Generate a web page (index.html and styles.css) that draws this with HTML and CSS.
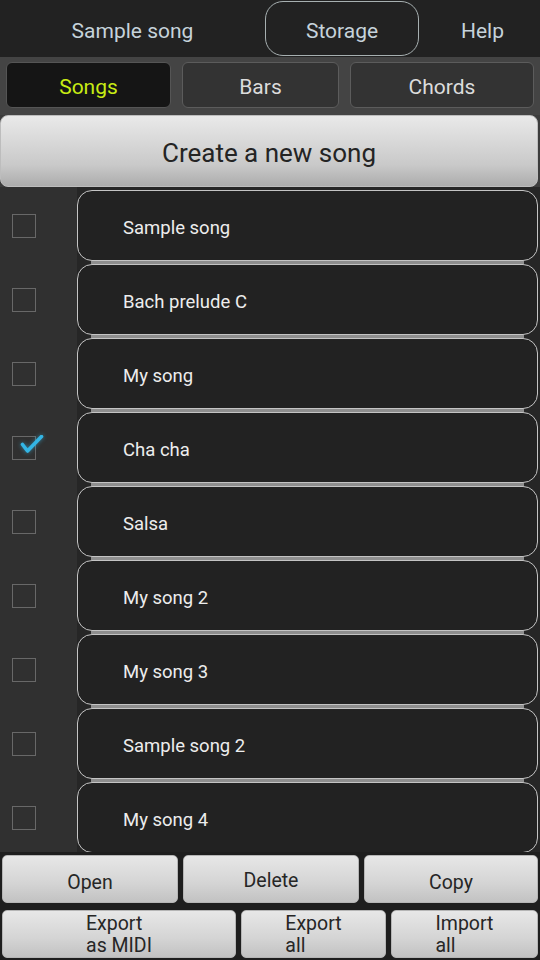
FILE: index.html
```html
<!DOCTYPE html>
<html>
<head>
<meta charset="utf-8">
<link rel="stylesheet" href="styles.css">
</head>
<body>
<div class="app">
  <header class="topbar">
    <div class="top-item">Sample song</div>
    <div class="top-item top-btn">Storage</div>
    <div class="top-item help">Help</div>
  </header>
  <nav class="tabs">
    <div class="tab active">Songs</div>
    <div class="tab">Bars</div>
    <div class="tab">Chords</div>
  </nav>
  <div class="create-wrap">
    <div class="create">Create a new song</div>
  </div>
  <div class="list">
    <div class="row"><div class="check"><span class="box"></span></div><div class="cardcol"><div class="sep"></div><div class="card">Sample song</div></div></div>
    <div class="row"><div class="check"><span class="box"></span></div><div class="cardcol"><div class="sep"></div><div class="card">Bach prelude C</div></div></div>
    <div class="row"><div class="check"><span class="box"></span></div><div class="cardcol"><div class="sep"></div><div class="card">My song</div></div></div>
    <div class="row"><div class="check"><span class="box checked"><svg class="tick" viewBox="0 0 30 30" width="30" height="30"><path d="M6.5 9.5 L11.5 16 L25.5 1.5" fill="none" stroke="#33b5e5" stroke-width="3.6" stroke-linecap="round" stroke-linejoin="round"/></svg></span></div><div class="cardcol"><div class="sep"></div><div class="card">Cha cha</div></div></div>
    <div class="row"><div class="check"><span class="box"></span></div><div class="cardcol"><div class="sep"></div><div class="card">Salsa</div></div></div>
    <div class="row"><div class="check"><span class="box"></span></div><div class="cardcol"><div class="sep"></div><div class="card">My song 2</div></div></div>
    <div class="row"><div class="check"><span class="box"></span></div><div class="cardcol"><div class="sep"></div><div class="card">My song 3</div></div></div>
    <div class="row"><div class="check"><span class="box"></span></div><div class="cardcol"><div class="sep"></div><div class="card">Sample song 2</div></div></div>
    <div class="row"><div class="check"><span class="box"></span></div><div class="cardcol"><div class="sep"></div><div class="card">My song 4</div></div></div>
  </div>
  <footer class="footer">
    <div class="btnrow row1">
      <div class="btn low">Open</div>
      <div class="btn">Delete</div>
      <div class="btn low">Copy</div>
    </div>
    <div class="btnrow row2">
      <div class="btn two"><span class="lines">Export<br>as MIDI</span></div>
      <div class="btn two"><span class="lines">Export<br>all</span></div>
      <div class="btn two"><span class="lines">Import<br>all</span></div>
    </div>
  </footer>
</div>
</body>
</html>
```
FILE: styles.css
```css
* { box-sizing: border-box; }
html, body {
  margin: 0;
  padding: 0;
  background: #1e1e1e;
  font-family: Roboto, "Liberation Sans", sans-serif;
}
.app {
  width: 540px;
  height: 960px;
  overflow: hidden;
  display: flex;
  flex-direction: column;
}
.topbar {
  height: 57px;
  background: #222222;
  display: grid;
  grid-template-columns: 265px 154px 1fr;
  align-items: stretch;
  padding-top: 1px;
}
.top-item {
  color: #c6d3db;
  font-size: 21px;
  display: flex;
  align-items: center;
  justify-content: center;
  padding-top: 4px;
  height: 55px;
}
.top-item.help { padding-left: 6px; }
.top-btn {
  border: 1px solid #a7b0b1;
  border-radius: 18px;
}
.tabs {
  height: 58px;
  background: #444444;
  display: grid;
  grid-template-columns: 165px 157px 184px;
  column-gap: 11px;
  padding: 5px 0 0 6px;
}
.tab {
  height: 46px;
  border: 1px solid #5c5c5c;
  border-radius: 6px;
  background: #333333;
  color: #dcdcdc;
  font-size: 21px;
  display: flex;
  align-items: center;
  justify-content: center;
  padding-top: 4px;
}
.tab.active {
  background: #151515;
  color: #c8ec14;
  border-color: #555555;
}
.create-wrap {
  background: #3c3c3c;
  padding: 0 2px 0 0;
}
.create {
  height: 72px;
  border-radius: 8px;
  border: 1px solid #bdbdbd;
  background: linear-gradient(#e9e9e9, #c9c9c9 70%, #acacac);
  color: #242424;
  font-size: 26px;
  display: flex;
  align-items: center;
  justify-content: center;
  padding-top: 3px;
}
.list {
  height: 665px;
  overflow: hidden;
  flex: none;
}
.row {
  display: grid;
  grid-template-columns: 77px 1fr;
  height: 74px;
}
.check {
  background: #303030;
  padding: 27px 0 0 12px;
}
.box {
  display: block;
  position: relative;
  width: 24px;
  height: 24px;
  border: 1px solid #686868;
}
.tick {
  position: absolute;
  left: 3px;
  top: -2px;
  filter: drop-shadow(0 0 2px rgba(51, 181, 229, 0.6));
}
.cardcol {
  background: #262626;
  padding-right: 2px;
}
.sep {
  height: 3px;
  margin: 0 14px;
  background: #8e8e8e;
}
.row:first-child .sep {
  background: transparent;
}
.card {
  height: 71px;
  border: 1px solid #c4c4c4;
  border-radius: 15px;
  background: #222222;
  color: #ededed;
  font-size: 18.5px;
  display: flex;
  align-items: center;
  padding: 4px 0 0 45px;
}
.footer {
  flex: 1;
  background: #1e1e1e;
  padding: 3px 2px 0 2px;
  display: flex;
  flex-direction: column;
  gap: 7px;
}
.btnrow {
  display: grid;
  height: 48px;
  column-gap: 5px;
}
.row1 { grid-template-columns: 176px 176px 1fr; }
.row2 { grid-template-columns: 234px 145px 1fr; }
.btn {
  border-radius: 5px;
  border: 1px solid #b5b5b5;
  background: linear-gradient(#e7e7e7, #d4d4d4 60%, #c2c2c2);
  color: #262626;
  font-size: 19.5px;
  display: flex;
  align-items: center;
  justify-content: center;
  padding-top: 2px;
}
.btn.low { padding-top: 6px; }
.btn.two {
  align-items: flex-start;
  padding-top: 2px;
  overflow: hidden;
}
.lines {
  display: inline-block;
  text-align: left;
  line-height: 22px;
}
```
